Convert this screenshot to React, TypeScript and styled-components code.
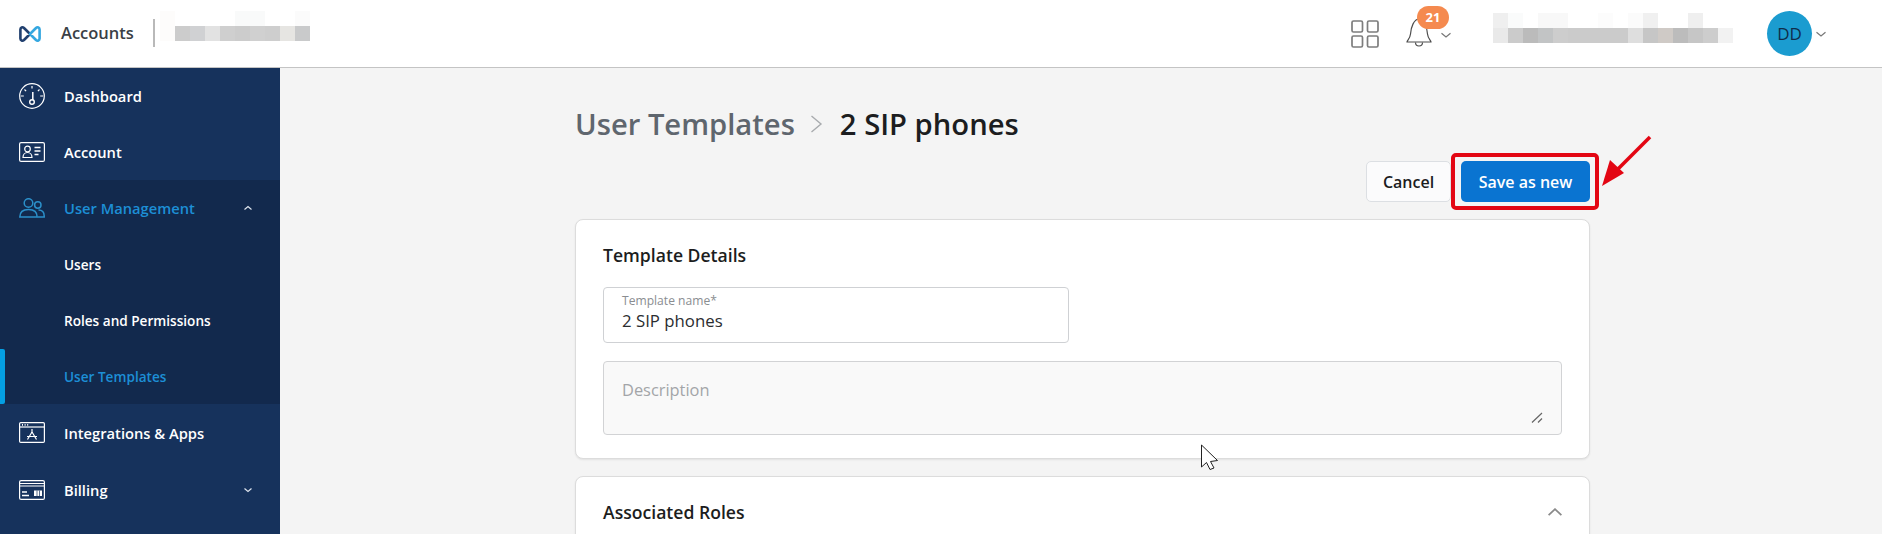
import React from "react";
import styled, { createGlobalStyle } from "styled-components";

const Global = createGlobalStyle`
  html, body { margin: 0; padding: 0; height: 534px; overflow: hidden; background: #f4f4f4; }
  * { box-sizing: border-box; }
  body { font-family: "Open Sans", "Noto Sans", sans-serif; }
`;

const Screen = styled.div`
  position: relative;
  width: 1882px;
  height: 534px;
  overflow: hidden;
  display: flex;
  flex-direction: column;
`;

const Header = styled.header`
  flex: none;
  height: 68px;
  background: #fff;
  border-bottom: 1px solid #c4c4c4;
  display: flex;
  align-items: center;
  padding-left: 19px;
`;

const AppName = styled.span`
  margin-left: 20px;
  margin-bottom: 2px;
  font-size: 16.5px;
  font-weight: 600;
  color: #3a3f46;
  width: 92px;
`;

const HeaderRule = styled.span`
  width: 2px;
  height: 28px;
  margin-bottom: 1px;
  background: #b9b9b9;
`;

const Pixels = styled.div<{ $left: number; $lift: number }>`
  display: grid;
  grid-auto-flow: column;
  grid-auto-columns: 15px;
  grid-template-rows: repeat(2, 15px);
  margin-left: ${(p) => p.$left}px;
  margin-bottom: ${(p) => p.$lift}px;
`;

const Pixel = styled.span<{ $shade: string }>`
  background: ${(p) => p.$shade};
`;

const HeaderRight = styled.div`
  margin-left: auto;
  display: flex;
  align-items: center;
  height: 100%;
  padding-right: 55px;
`;

const AppsButton = styled.div`
  display: flex;
  margin-right: 27px;
`;

const BellWrap = styled.div`
  position: relative;
  width: 45px;
  height: 40px;
  padding-top: 3px;
  display: flex;
  align-items: flex-start;
`;

const BellCaret = styled.span`
  position: absolute;
  left: 34px;
  top: 15px;
  display: flex;
`;

const Badge = styled.span`
  position: absolute;
  left: 11px;
  top: -8px;
  width: 32px;
  height: 23px;
  border-radius: 12px;
  background: #f58a4f;
  color: #fff;
  font-size: 13px;
  font-weight: 700;
  display: flex;
  align-items: center;
  justify-content: center;
`;

const Avatar = styled.div`
  width: 45px;
  height: 45px;
  margin-left: 34px;
  margin-right: 3px;
  border-radius: 50%;
  background: #1b9cd0;
  color: #0f2d4a;
  font-size: 17px;
  display: flex;
  align-items: center;
  justify-content: center;
`;

const Body = styled.div`
  flex: 1;
  display: flex;
  min-height: 0;
`;

const Sidebar = styled.nav`
  flex: none;
  width: 280px;
  background: #16325c;
  color: #fff;
`;

const Group = styled.div`
  background: #12294d;
`;

const NavRow = styled.div<{ $active?: boolean; $tall?: boolean }>`
  height: ${(p) => (p.$tall ? 57 : 56)}px;
  display: flex;
  align-items: center;
  padding-left: 19px;
  font-size: 14.7px;
  font-weight: 600;
  color: ${(p) => (p.$active ? "#1d8fd6" : "#fff")};
`;

const SubRow = styled.div<{ $active?: boolean; $marked?: boolean }>`
  position: relative;
  height: 56px;
  display: flex;
  align-items: center;
  padding-left: 64px;
  font-size: 13.6px;
  font-weight: 600;
  color: ${(p) => (p.$active ? "#1d8fd6" : "#fff")};
  ${(p) =>
    p.$marked &&
    `&::before {
      content: "";
      position: absolute;
      left: 0;
      top: 1px;
      bottom: 0;
      width: 5px;
      background: #049fe3;
      border-radius: 0 2px 2px 0;
    }`}
`;

const NavIcon = styled.span`
  width: 26px;
  height: 26px;
  margin-right: 19px;
  display: flex;
  align-items: center;
  justify-content: center;
`;

const NavLabel = styled.span`
  flex: 1;
`;

const NavCaret = styled.span`
  width: 12px;
  margin-right: 26px;
  display: flex;
`;

const Main = styled.main`
  flex: 1;
  padding-left: 295px;
  padding-top: 36px;
  overflow: hidden;
`;

const Column = styled.div`
  width: 1015px;
`;

const Breadcrumb = styled.h1`
  margin: 0;
  height: 40px;
  display: flex;
  align-items: center;
  font-size: 29.2px;
  font-weight: 600;
  line-height: 40px;
`;

const CrumbLink = styled.span`
  color: #5f666e;
`;

const CrumbCurrent = styled.span`
  color: #1c1d20;
`;

const CrumbSep = styled.span`
  display: flex;
  margin: 0 17px 0 15px;
`;

const Actions = styled.div`
  margin-top: 17px;
  height: 41px;
  display: flex;
  justify-content: flex-end;
`;

const CancelButton = styled.button`
  width: 85px;
  height: 41px;
  margin-right: 10px;
  border: 1px solid #dcdfe3;
  border-radius: 5px;
  background: #fbfbfc;
  color: #1b1c1e;
  font: 600 16px "Open Sans", sans-serif;
  padding: 0;
`;

const SaveButton = styled.button`
  width: 129px;
  height: 41px;
  border: none;
  border-radius: 5px;
  background: #0a74d1;
  color: #fff;
  font: 600 16px "Open Sans", sans-serif;
  padding: 0;
`;

const Card = styled.section`
  margin-top: 17px;
  background: #fff;
  border: 1px solid #dcdcdc;
  border-radius: 8px;
  box-shadow: 0 1px 2px rgba(0, 0, 0, 0.08);
  padding: 24px 27px 23px;
`;

const CardTitle = styled.h2`
  margin: 0;
  font-size: 17.6px;
  font-weight: 600;
  line-height: 22px;
  color: #1c1d20;
`;

const CardHeader = styled.div`
  display: flex;
  align-items: center;
  justify-content: space-between;
`;

const Field = styled.div`
  margin-top: 21px;
  width: 466px;
  height: 56px;
  border: 1px solid #cfd1d4;
  border-radius: 4px;
  padding: 5px 18px 0;
`;

const FieldLabel = styled.div`
  font-size: 12.1px;
  line-height: 16px;
  color: #8a8d91;
`;

const FieldValue = styled.div`
  font-size: 16.8px;
  line-height: 23px;
  color: #2b2d30;
`;

const TextArea = styled.div`
  position: relative;
  margin-top: 18px;
  height: 74px;
  background: #f9f9f9;
  border: 1px solid #d2d3d5;
  border-radius: 4px;
  padding: 16px 18px;
  font-size: 16.4px;
  line-height: 24px;
  color: #a3a5a8;
`;

const ResizeGrip = styled.span`
  position: absolute;
  right: 18px;
  bottom: 10px;
  display: flex;
`;

const Highlight = styled.div`
  position: absolute;
  left: 1451px;
  top: 153px;
  width: 148px;
  height: 57px;
  border: 4px solid #e30613;
  border-radius: 5px;
  pointer-events: none;
`;

const RedArrow = styled.svg`
  position: absolute;
  left: 1595px;
  top: 132px;
  pointer-events: none;
`;

const MouseCursor = styled.svg`
  position: absolute;
  left: 1200px;
  top: 444px;
  pointer-events: none;
`;

const accountTop = ["#fdfcfb", "#fff", "#fff", "#fff", "#fff", "#f9fafa", "#f9fafa", "#fff", "#fff", "#fbfbfb"];
const accountBottom = ["#fdfcfb", "#cccccc", "#d0d1d3", "#e2e2e2", "#cfcfcf", "#cccccc", "#d0d0d0", "#cecece", "#e6e5e2", "#c9cacb"];

const userTop = ["#efefef", "#fafbfb", "#fff", "#f8f8f8", "#f8f8f8", "#fff", "#fff", "#fcfcfc", "#fff", "#fbfbfb", "#f0f0f0", "#fff", "#fff", "#efefef", "#fff", "#fff"];
const userBottom = ["#e9e9e9", "#cbcbcb", "#bbbbbb", "#c2c4c5", "#cdcdcd", "#cbcbcb", "#cbcbcb", "#cbcbcb", "#cbcbcb", "#dedede", "#c6c6c6", "#cfcac6", "#bcbcbc", "#c6c6c6", "#cdcdcd", "#f2f2f2"];

const Chevron = ({ up, color = "#fff" }: { up?: boolean; color?: string }) => (
  <svg width="12" height="12" viewBox="0 0 12 12" fill="none" stroke={color} strokeWidth="1.2">
    <path d={up ? "M1.500 7.800 6 4l4.500 3.800" : "M1.500 4.200 6 8l4.500-3.800"} />
  </svg>
);

const SmallCaret = ({ up }: { up?: boolean }) => (
  <svg width="12" height="12" viewBox="0 0 12 12" fill="none" stroke="#dfe5ee" strokeWidth="1.2">
    <path d={up ? "M2.500 7.500 6 4.500l3.500 3" : "M2.500 4.500 6 7.500l3.500-3"} />
  </svg>
);

const Logo = () => (
  <svg width="22" height="18" viewBox="0 0 22 18" fill="none" strokeWidth="2.6" strokeLinecap="round">
    <path d="M11 9 5 3c-1.500-1.400-3.600-.6-3.600 1.400v9.200c0 2 2.100 2.800 3.600 1.400L11 9" stroke="#21406f" />
    <path d="M11 9l6-6c1.500-1.400 3.600-.6 3.600 1.400v9.200c0 2-2.100 2.800-3.600 1.400L11 9" stroke="#35a7e0" />
  </svg>
);

const DashIcon = () => (
  <svg width="26" height="26" viewBox="0 0 26 26" fill="none" stroke="#fff" strokeWidth="1.2">
    <circle cx="13" cy="13" r="12.300" />
    <path d="M13 3v2.500M5.500 6.500l1.600 1.600M20.500 6.500l-1.600 1.600M1.800 13h3M21.200 13h3" />
    <path d="M13.800 9v8" strokeWidth="1.500" />
    <circle cx="13" cy="19" r="2.300" strokeWidth="1.400" />
  </svg>
);

const AccountIcon = () => (
  <svg width="26" height="20" viewBox="0 0 26 20" fill="none" stroke="#fff" strokeWidth="1.200">
    <rect x="0.600" y="0.600" width="24.800" height="18.800" rx="1.500" />
    <circle cx="8.500" cy="7" r="2.800" />
    <path d="M4 15.500c0-3 2-5 4.500-5s4.500 2 4.500 5z" />
    <path d="M15.500 5.500h6M15.500 9h6M15.500 12.500h4" strokeWidth="1.400" />
  </svg>
);

const UsersIcon = () => (
  <svg width="26" height="20" viewBox="0 0 26 20" fill="none" stroke="#2b8fc9" strokeWidth="1.500">
    <circle cx="9.500" cy="5" r="4.300" />
    <path d="M.8 19c0-5 3.600-7.600 8.700-7.600s8.700 2.600 8.700 7.600z" />
    <circle cx="18.800" cy="7" r="3.200" />
    <path d="M19.500 12c3.700 0 5.700 2.400 5.700 6v1h-6.500" />
  </svg>
);

const AppsIcon = () => (
  <svg width="26" height="21" viewBox="0 0 26 21" fill="none" stroke="#fff" strokeWidth="1.200">
    <rect x="0.600" y="0.600" width="24.800" height="19.800" rx="1.200" />
    <path d="M.6 5h24.800" />
    <path d="M3 2.800h1M5.600 2.800h1M8.200 2.800h1" strokeWidth="1.800" />
    <path d="M13 7v3M13 10l-4.500 7.500M13 10l4.500 7.500M8 14.500h10" />
  </svg>
);

const BillingIcon = () => (
  <svg width="26" height="20" viewBox="0 0 26 20" fill="none" stroke="#fff" strokeWidth="1.200">
    <rect x="0.600" y="0.600" width="24.800" height="18.800" rx="1.500" />
    <path d="M.6 3.500h24.800M.6 6h24.800" />
    <path d="M3 12h5M3 15.500h7" strokeWidth="1.300" />
    <rect x="15" y="10.500" width="8" height="5.500" fill="#fff" stroke="none" />
    <path d="M18 10.500v5.500M20.500 10.500v5.500" stroke="#16325c" strokeWidth="0.700" />
  </svg>
);

const GridIcon = () => (
  <svg width="28" height="28" viewBox="0 0 28 28" fill="none" stroke="#7d7d7d" strokeWidth="1.700">
    <rect x="1" y="1" width="10.500" height="11" rx="1.500" />
    <rect x="16.500" y="1" width="10.500" height="11" rx="1.500" />
    <rect x="1" y="16" width="10.500" height="11" rx="1.500" />
    <rect x="16.500" y="16" width="10.500" height="11" rx="1.500" />
  </svg>
);

const BellIcon = () => (
  <svg width="26" height="30" viewBox="0 0 26 30" fill="none" stroke="#4d4d4d" strokeWidth="1.200">
    <path d="M1 25c0-1.500 3-3 3.500-8C5 10 8 2 13 2s8 8 8.500 15c.5 5 3.500 6.500 3.500 8z" />
    <path d="M9.500 25.500c0 2.200 1.500 3.500 3.500 3.500s3.500-1.300 3.500-3.500" />
  </svg>
);

const subItems = [
  { label: "Users" },
  { label: "Roles and Permissions" },
  { label: "User Templates", active: true, marked: true },
];

export default function App() {
  return (
    <Screen>
      <Global />
      <Header>
        <Logo />
        <AppName>Accounts</AppName>
        <HeaderRule />
        <Pixels $left={5} $lift={15}>
          {accountTop.map((t, i) => (
            <React.Fragment key={i}>
              <Pixel $shade={t} />
              <Pixel $shade={accountBottom[i]} />
            </React.Fragment>
          ))}
        </Pixels>
        <HeaderRight>
          <AppsButton>
            <GridIcon />
          </AppsButton>
          <BellWrap>
            <BellIcon />
            <Badge>21</Badge>
            <BellCaret>
              <Chevron color="#777" />
            </BellCaret>
          </BellWrap>
          <Pixels $left={42} $lift={11}>
            {userTop.map((t, i) => (
              <React.Fragment key={i}>
                <Pixel $shade={t} />
                <Pixel $shade={userBottom[i]} />
              </React.Fragment>
            ))}
          </Pixels>
          <Avatar>DD</Avatar>
          <Chevron color="#777" />
        </HeaderRight>
      </Header>
      <Body>
        <Sidebar>
          <NavRow>
            <NavIcon><DashIcon /></NavIcon>
            <NavLabel>Dashboard</NavLabel>
          </NavRow>
          <NavRow>
            <NavIcon><AccountIcon /></NavIcon>
            <NavLabel>Account</NavLabel>
          </NavRow>
          <Group>
            <NavRow $active>
              <NavIcon><UsersIcon /></NavIcon>
              <NavLabel>User Management</NavLabel>
              <NavCaret><SmallCaret up /></NavCaret>
            </NavRow>
            {subItems.map((it) => (
              <SubRow key={it.label} $active={it.active} $marked={it.marked}>
                {it.label}
              </SubRow>
            ))}
          </Group>
          <NavRow $tall>
            <NavIcon><AppsIcon /></NavIcon>
            <NavLabel>Integrations &amp; Apps</NavLabel>
          </NavRow>
          <NavRow $tall>
            <NavIcon><BillingIcon /></NavIcon>
            <NavLabel>Billing</NavLabel>
            <NavCaret><SmallCaret /></NavCaret>
          </NavRow>
        </Sidebar>
        <Main>
          <Column>
            <Breadcrumb>
              <CrumbLink>User Templates</CrumbLink>
              <CrumbSep>
                <svg width="13" height="22" viewBox="0 0 13 22" fill="none" stroke="#a8abae" strokeWidth="1.400">
                  <path d="M1.500 3l9.500 8-9.500 8" />
                </svg>
              </CrumbSep>
              <CrumbCurrent>2 SIP phones</CrumbCurrent>
            </Breadcrumb>
            <Actions>
              <CancelButton>Cancel</CancelButton>
              <SaveButton>Save as new</SaveButton>
            </Actions>
            <Card>
              <CardTitle>Template Details</CardTitle>
              <Field>
                <FieldLabel>Template name*</FieldLabel>
                <FieldValue>2 SIP phones</FieldValue>
              </Field>
              <TextArea>
                Description
                <ResizeGrip>
                  <svg width="12" height="12" viewBox="0 0 12 12" fill="none" stroke="#666" strokeWidth="1.200">
                    <path d="M1 10.500 11 1M7 10.500l4-4" />
                  </svg>
                </ResizeGrip>
              </TextArea>
            </Card>
            <Card>
              <CardHeader>
                <CardTitle>Associated Roles</CardTitle>
                <svg width="14" height="8" viewBox="0 0 14 8" fill="none" stroke="#8a8a8a" strokeWidth="1.800">
                  <path d="M.6 7.200 7 1.200l6.400 6" />
                </svg>
              </CardHeader>
            </Card>
          </Column>
        </Main>
      </Body>
      <Highlight />
      <RedArrow width="58" height="60" viewBox="0 0 58 60">
        <path d="M55 5 20 40" stroke="#e30613" strokeWidth="3.600" fill="none" />
        <path d="M7 54l8-26 14 13z" fill="#e30613" />
      </RedArrow>
      <MouseCursor width="20" height="28" viewBox="0 0 20 28">
        <path d="M1.500 1v22l5-4.500 3.500 7 4-1.500-3.500-6.500 7-1z" fill="#fff" stroke="#222" strokeWidth="1" />
      </MouseCursor>
    </Screen>
  );
}
